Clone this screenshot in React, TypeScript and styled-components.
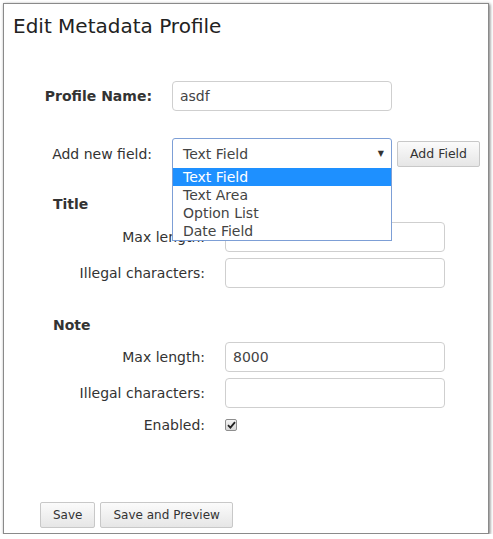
import React from 'react';
import styled, { createGlobalStyle } from 'styled-components';

const Global = createGlobalStyle`
  html, body { margin: 0; padding: 0; background: #fff; }
  body { font-family: "DejaVu Sans", Verdana, sans-serif; color: #333; }
`;

const Panel = styled.div`
  box-sizing: border-box;
  margin: 3px 0 0 3px;
  width: 486px;
  height: 531px;
  border: 1px solid #8a8a8a;
  box-shadow: 1px 1px 3px rgba(0, 0, 0, 0.55);
  background: #fff;
  padding: 9px 0 0 9px;
  display: flex;
  flex-direction: column;
`;

const Title = styled.h1`
  margin: 0;
  font-size: 20px;
  line-height: 26px;
  font-weight: normal;
  color: #222;
`;

const Form = styled.div`
  display: flex;
  flex-direction: column;
  flex: 1;
`;

const Row = styled.div<{ $top?: number; $labelWidth: number }>`
  display: flex;
  align-items: center;
  margin-top: ${({ $top }) => $top ?? 6}px;
  position: relative;
  & > label {
    width: ${({ $labelWidth }) => $labelWidth}px;
  }
`;

const Label = styled.label<{ $bold?: boolean }>`
  box-sizing: border-box;
  text-align: right;
  padding-right: 20px;
  font-size: 14px;
  font-weight: ${({ $bold }) => ($bold ? 'bold' : 'normal')};
  color: #333;
  white-space: nowrap;
`;

const Input = styled.div`
  box-sizing: border-box;
  width: 220px;
  height: 30px;
  border: 1px solid #cfcfcf;
  border-radius: 4px;
  padding: 0 7px;
  display: flex;
  align-items: center;
  font-size: 14px;
  color: #444;
`;

const Select = styled.div`
  box-sizing: border-box;
  width: 220px;
  height: 31px;
  border: 1px solid #7d9fd6;
  border-radius: 3px 3px 0 0;
  padding: 0 7px 0 10px;
  display: flex;
  align-items: center;
  justify-content: space-between;
  font-size: 14px;
  color: #444;
`;

const Arrow = styled.span`
  font-size: 8px;
  color: #333;
`;

const Menu = styled.ul`
  position: absolute;
  left: 159px;
  top: 30px;
  box-sizing: border-box;
  width: 220px;
  margin: 0;
  padding: 0;
  list-style: none;
  border: 1px solid #7d9fd6;
  border-top: none;
  background: #fff;
  z-index: 2;
`;

const Option = styled.li<{ $active?: boolean }>`
  height: 18px;
  line-height: 18px;
  padding-left: 10px;
  font-size: 14px;
  color: ${({ $active }) => ($active ? '#fff' : '#444')};
  background: ${({ $active }) => ($active ? '#1e90ff' : 'transparent')};
`;

const Button = styled.button`
  box-sizing: border-box;
  height: 26px;
  padding: 0 12px;
  border: 1px solid #c8c8c8;
  border-radius: 2px;
  background: linear-gradient(#fbfbfb, #e6e6e6);
  font-family: inherit;
  font-size: 12px;
  color: #333;
`;

const AddButton = styled(Button)`
  margin-left: 5px;
  width: 83px;
  padding: 0;
  font-size: 12.5px;
`;

const Section = styled.div<{ $top: number }>`
  font-size: 14px;
  font-weight: bold;
  line-height: 20px;
  padding-left: 40px;
  margin-top: ${({ $top }) => $top}px;
  color: #333;
`;

const Check = styled.span`
  box-sizing: border-box;
  width: 12px;
  height: 12px;
  border: 1px solid #8e8e8e;
  border-radius: 2px;
  background: linear-gradient(#f4f4f4, #d8d8d8);
  display: flex;
  align-items: center;
  justify-content: center;
`;

const Footer = styled.div`
  margin-top: auto;
  margin-bottom: 5px;
  padding-left: 27px;
  display: flex;
  gap: 5px;
`;

const FieldRow: React.FC<{ label: string; top?: number; children?: React.ReactNode }> = ({ label, top, children }) => (
  <Row $labelWidth={212} $top={top}>
    <Label>{label}</Label>
    {children}
  </Row>
);

export default function App() {
  return (
    <>
      <Global />
      <Panel>
        <Title>Edit Metadata Profile</Title>
        <Form>
          <Row $labelWidth={159} $top={42}>
            <Label $bold>Profile Name:</Label>
            <Input>asdf</Input>
          </Row>
          <Row $labelWidth={159} $top={27}>
            <Label>Add new field:</Label>
            <Select>
              <span>Text Field</span>
              <Arrow>▼</Arrow>
            </Select>
            <AddButton>Add Field</AddButton>
            <Menu>
              <Option $active>Text Field</Option>
              <Option>Text Area</Option>
              <Option>Option List</Option>
              <Option>Date Field</Option>
            </Menu>
          </Row>

          <Section $top={25}>Title</Section>
          <FieldRow label="Max length:" top={8}>
            <Input />
          </FieldRow>
          <FieldRow label="Illegal characters:">
            <Input />
          </FieldRow>

          <Section $top={27}>Note</Section>
          <FieldRow label="Max length:" top={7}>
            <Input>8000</Input>
          </FieldRow>
          <FieldRow label="Illegal characters:">
            <Input />
          </FieldRow>
          <FieldRow label="Enabled:" top={9}>
            <Check>
              <svg width="9" height="8" viewBox="0 0 9 8">
                <path d="M1 4.2 L3.4 6.6 L8 1.2" fill="none" stroke="#222" strokeWidth="1.8" />
              </svg>
            </Check>
          </FieldRow>

          <Footer>
            <Button>Save</Button>
            <Button>Save and Preview</Button>
          </Footer>
        </Form>
      </Panel>
    </>
  );
}
